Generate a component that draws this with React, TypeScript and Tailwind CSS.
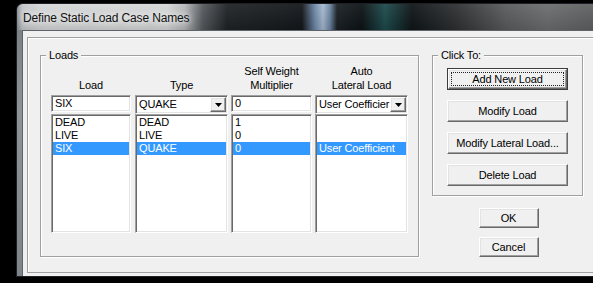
import React from "react";

const sunken =
  "border border-t-[#a0a0a0] border-l-[#a0a0a0] border-r-white border-b-white shadow-[inset_1px_1px_0_#696969,inset_-1px_-1px_0_#e3e3e3] bg-white";
const raised =
  "border border-t-white border-l-white border-r-[#696969] border-b-[#696969] shadow-[inset_-1px_-1px_0_#a0a0a0,inset_1px_1px_0_#e3e3e3] bg-[#f0f0f0]";

function Arrow() {
  return (
    <svg width="7" height="4" viewBox="0 0 7 4">
      <polygon points="0,0 7,0 3.5,4" fill="#000" />
    </svg>
  );
}

function Combo({ text }: { text: string }) {
  return (
    <div className={`${sunken} h-[19px] flex items-stretch`}>
      <div className="flex-1 whitespace-nowrap pl-[3px] leading-[17px]">{text}</div>
      <div className={`${raised} w-[16px] my-[1px] mr-[1px] flex items-center justify-center`}>
        <Arrow />
      </div>
    </div>
  );
}

type Col = {
  header: string[];
  w: string;
  ml: string;
  combo: boolean;
  value: string;
  items: string[];
};

const cols: Col[] = [
  { header: ["Load"], w: "w-[80px]", ml: "ml-0", combo: false, value: "SIX", items: ["DEAD", "LIVE", "SIX"] },
  { header: ["Type"], w: "w-[93px]", ml: "ml-[4px]", combo: true, value: "QUAKE", items: ["DEAD", "LIVE", "QUAKE"] },
  { header: ["Self Weight", "Multiplier"], w: "w-[81px]", ml: "ml-[3px]", combo: false, value: "0", items: ["1", "0", "0"] },
  { header: ["Auto", "Lateral Load"], w: "w-[93px]", ml: "ml-[3px]", combo: true, value: "User Coefficier", items: ["", "", "User Coefficient"] },
];

function Button({ label, isDefault, w, h }: { label: string; isDefault?: boolean; w: string; h: string }) {
  if (isDefault) {
    return (
      <div className={`${w} ${h} border border-[#3c3c3c] flex`}>
        <div className={`${raised} flex-1 p-[2px] flex`}>
          <div className="flex-1 border border-dotted border-[#222] flex items-center justify-center leading-none">
            {label}
          </div>
        </div>
      </div>
    );
  }
  return (
    <div className={`${raised} ${w} ${h} flex items-center justify-center leading-none`}>{label}</div>
  );
}

function GroupLabel({ text }: { text: string }) {
  return (
    <div className="absolute left-[5px] top-[-8px] bg-[#f0f0f0] px-[3px] leading-[14px]">{text}</div>
  );
}

export default function App() {
  return (
    <div className="w-[593px] h-[283px] bg-black overflow-hidden pt-[3px] pl-[16px] font-['Liberation_Sans',Arial,sans-serif] text-[11px] text-black tracking-[-0.15px]">
      <div className="w-[600px] h-[274px] rounded-tl-[7px] border-l border-t border-b border-[#1d2125] bg-[linear-gradient(180deg,#767b80,#8e9398_40%,#7f8488)] flex flex-col overflow-hidden">
        <div className="h-[26px] shrink-0 bg-[linear-gradient(180deg,rgba(255,255,255,0.06),rgba(0,0,0,0.12)),linear-gradient(90deg,#8c9196_0px,#c4c7ca_5px,#d7d8d9_25px,#d6d7d8_150px,#b4b6b8_168px,#55595d_186px,#202326_210px,#14171a_285px,#6f8aab_298px,#a7bad0_306px,#6d86a4_313px,#1a2024_320px,#0d1315_345px,#1c4b4d_368px,#0f1517_395px,#2f3133_440px,#5a5c5e_490px,#6b6d6f_530px,#5e6061_577px)] flex items-center pl-[6px] pt-[1px]">
          <span className="text-[12px] tracking-[-0.15px] text-[#111] [text-shadow:0_0_6px_#fff,0_0_10px_#fff]">
            Define Static Load Case Names
          </span>
        </div>
        <div className="flex flex-1">
          <div className="w-[5px] shrink-0" />
          <div className="flex-1 bg-[#f0f0f0] border-l border-t border-[#5d6369] pl-[4px] pt-[6px]">
            <div className="w-[600px] h-[236px] border border-[#a0a0a0] shadow-[inset_1px_1px_0_#fff] flex items-start pl-[12px] pt-[17px]">
              {/* Loads group */}
              <div className="relative w-[379px] h-[202px] shrink-0 border border-[#a0a0a0] shadow-[inset_1px_1px_0_#fff,1px_1px_0_#fff] pl-[10px] pt-[8px] flex">
                <GroupLabel text="Loads" />
                {cols.map((c, i) => (
                  <div key={i} className={`${c.w} ${c.ml} shrink-0 flex flex-col`}>
                    <div className="h-[28px] flex flex-col justify-end items-center leading-[14px] text-center">
                      {c.header.map((h) => (
                        <div key={h}>{h}</div>
                      ))}
                    </div>
                    <div className="mt-[3px] h-[19px]">
                      {c.combo ? (
                        <Combo text={c.value} />
                      ) : (
                        <div className={`${sunken} h-[17px] pl-[3px] leading-[15px]`}>{c.value}</div>
                      )}
                    </div>
                    <div className={`${sunken} h-[119px] pt-[1px] pl-[1px] pr-[1px]`}>
                      {c.items.map((it, j) => (
                        <div
                          key={j}
                          className={`h-[13px] leading-[13px] pl-[2px] whitespace-nowrap ${
                            j === 2 ? "bg-[#3399ff] text-white" : ""
                          }`}
                        >
                          {it}
                        </div>
                      ))}
                    </div>
                  </div>
                ))}
              </div>
              {/* Right column */}
              <div className="ml-[13px] w-[151px] shrink-0 flex flex-col items-center">
                <div className="relative w-[151px] h-[141px] border border-[#a0a0a0] shadow-[inset_1px_1px_0_#fff,1px_1px_0_#fff] pl-[14px] pt-[12px] flex flex-col gap-[10px]">
                  <GroupLabel text="Click To:" />
                  <Button label="Add New Load" isDefault w="w-[121px]" h="h-[22px]" />
                  <Button label="Modify Load" w="w-[121px]" h="h-[22px]" />
                  <Button label="Modify Lateral Load..." w="w-[121px]" h="h-[22px]" />
                  <Button label="Delete Load" w="w-[121px]" h="h-[22px]" />
                </div>
                <div className="mt-[12px] ml-[2px] flex flex-col gap-[9px]">
                  <Button label="OK" w="w-[60px]" h="h-[20px]" />
                  <Button label="Cancel" w="w-[60px]" h="h-[20px]" />
                </div>
              </div>
            </div>
          </div>
        </div>
      </div>
    </div>
  );
}
